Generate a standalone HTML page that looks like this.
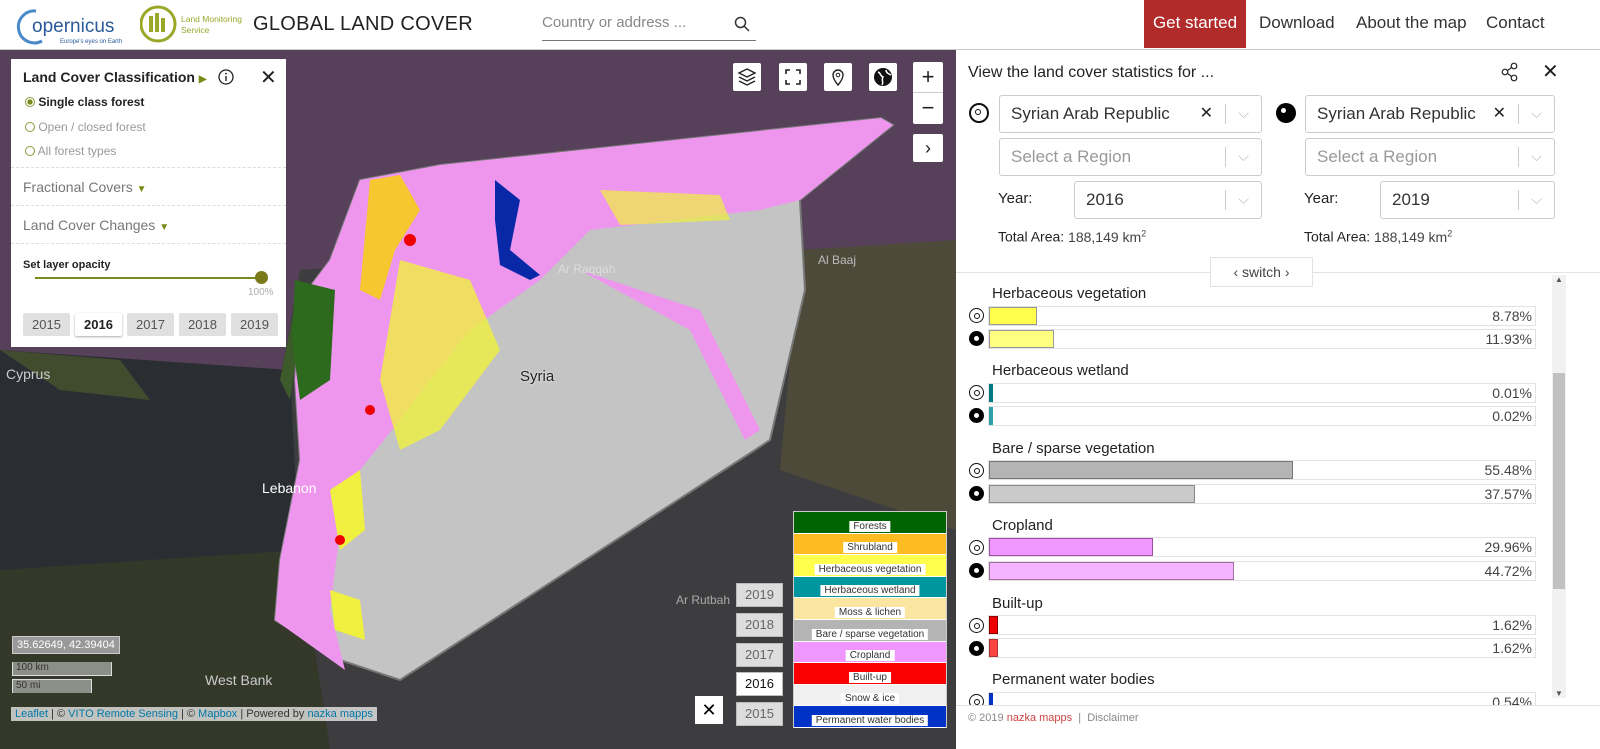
<!DOCTYPE html>
<html><head><meta charset="utf-8"><style>
*{box-sizing:border-box;margin:0;padding:0}
body{width:1600px;height:749px;overflow:hidden;background:#fff;font-family:"Liberation Sans",sans-serif;position:relative}
.hdr{position:absolute;left:0;top:0;width:1600px;height:50px;background:#fff;border-bottom:1px solid #ccc}
.nav{position:absolute;top:0;height:48px;line-height:46px;font-size:17px;color:#333}
.map{position:absolute;left:0;top:50px;width:956px;height:699px;overflow:hidden;background:#3b3b3d}
.btn{position:absolute;background:#fff;width:28px;height:28px;border-radius:2px}
.rp{position:absolute;left:956px;top:50px;width:644px;height:699px;background:#fff}
.sel{position:absolute;border:1px solid #ccc;border-radius:3px;height:38px;font-size:17px;color:#333;line-height:36px;padding-left:11px}
.sel .ar{position:absolute;right:0;top:8px;width:36px;height:20px;border-left:1px solid #ccc;color:#bbb;text-align:center;line-height:18px;font-size:14px}
.ph{color:#999}
.lbl{position:absolute;font-size:15px;color:#222}
.ttl{position:absolute;left:992px;font-size:15px;color:#222}
.bar{position:absolute;left:988px;width:548px;height:20px;border:1px solid #e2e2e2}
.bar i{position:absolute;left:0;top:0;bottom:0;display:block}
.bar span{position:absolute;right:3px;top:1px;font-size:14px;color:#444}
.ic{position:absolute;left:969px;width:15px;height:15px;border-radius:50%}
.ic.o{border:1.5px solid #111}
.ic.o:after{content:"";position:absolute;left:4px;top:4px;width:4px;height:4px;border:1px solid #111;border-radius:50%}
.ic.f{background:#000}
.ic.f:after{content:"";position:absolute;left:5px;top:5px;width:5px;height:5px;background:#fff;border-radius:50%}
.leg div{height:21.6px;border-bottom:1px solid #fff;text-align:center;position:relative}
.leg span{position:absolute;left:50%;transform:translateX(-50%);bottom:1px;background:#fff;font-size:10px;color:#333;padding:0 4px;white-space:nowrap;line-height:11px}
.yr{position:absolute;left:736px;width:47px;height:24px;background:#ddd;border:1px solid #bbb;font-size:13px;color:#666;text-align:center;line-height:22px}
.yb{position:absolute;top:254px;width:47px;height:23px;background:#e0e0e0;font-size:13px;color:#555;text-align:center;line-height:23px;border-radius:2px}
</style></head><body>
<div class="hdr">
 <div style="position:absolute;left:14px;top:5px;width:110px;height:40px">
  <svg width="110" height="40"><path d="M22 6 A16 16 0 1 0 28 36" fill="none" stroke="#4a8ac8" stroke-width="3"/><text x="18" y="27" font-size="19" fill="#2a5a9a" font-family="Liberation Sans">opernicus</text><text x="46" y="38" font-size="6" fill="#2a5a9a">Europe's eyes on Earth</text></svg>
 </div>
 <div style="position:absolute;left:140px;top:4px;width:105px;height:42px">
  <svg width="105" height="42"><circle cx="18" cy="20" r="17" fill="none" stroke="#9aa82a" stroke-width="3"/><rect x="9" y="12" width="4" height="16" fill="#9aa82a"/><rect x="15" y="9" width="4" height="19" fill="#9aa82a"/><rect x="21" y="14" width="4" height="14" fill="#9aa82a"/><text x="41" y="18" font-size="8.5" fill="#9aa82a">Land Monitoring</text><text x="41" y="29" font-size="8.5" fill="#9aa82a">Service</text></svg>
 </div>
 <div style="position:absolute;left:253px;top:13px;font-size:20px;color:#222;letter-spacing:0.3px">GLOBAL LAND COVER</div>
 <div style="position:absolute;left:542px;top:14px;width:214px;height:27px;border-bottom:1.5px solid #777;font-size:15px;color:#888">Country or address ...
  <svg style="position:absolute;right:6px;top:2px" width="16" height="16"><circle cx="6.5" cy="6.5" r="5" fill="none" stroke="#333" stroke-width="1.5"/><path d="M10 10 L15 15" stroke="#333" stroke-width="1.5"/></svg></div>
 <div class="nav" style="left:1144px;width:102px;background:#b22b2b;color:#fff;text-align:center">Get started</div>
 <div class="nav" style="left:1259px">Download</div>
 <div class="nav" style="left:1356px">About the map</div>
 <div class="nav" style="left:1486px">Contact</div>
</div>

<div class="map">
<svg width="956" height="699" style="position:absolute;left:0;top:0">
 <rect x="0" y="0" width="956" height="699" fill="#3d3d3f"/>
 <path d="M0 0 H956 V250 L800 260 L760 230 L560 200 L300 220 L280 330 L0 310 Z" fill="#57405a"/>
 <path d="M800 200 L956 190 V480 L780 420 Z" fill="#4e4a3a"/>
 <path d="M0 300 L290 320 L300 520 L0 520 Z" fill="#2a2e33"/>
 <path d="M0 520 L300 500 L330 699 H0 Z" fill="#333828"/>
 <path d="M0 300 L120 310 L150 350 L60 340 Z" fill="#4b5a2e" opacity=".7"/>
 <path d="M300 230 L280 330 L290 350 L300 280 Z" fill="#3d5a2a"/>
 <path d="M520 120 L560 100 L620 130 L700 110 L760 130 L700 150 L600 150 Z" fill="#6a6a2e" opacity=".5"/>
 <path d="M360 130 L440 115 L881 68 L893 75 L800 150 L805 240 L770 390 L755 400 L400 630 L340 610 L275 570 L280 510 L300 410 L295 330 L300 250 L330 210 Z" fill="#c4c4c4" stroke="#777" stroke-width="2"/>
 <path d="M360 130 L440 115 L881 68 L893 75 L800 150 L760 160 L590 180 L540 230 L470 280 L430 330 L400 370 L360 420 L340 480 L330 560 L345 620 L275 570 L280 510 L300 410 L295 330 L300 250 L330 210 Z" fill="#ee96ee"/>
 <path d="M580 220 L700 260 L760 380 L745 390 L690 280 Z" fill="#ee96ee"/>
 <path d="M370 130 L400 125 L420 160 L395 200 L380 250 L360 240 Z" fill="#f5c830"/>
 <path d="M400 210 L470 230 L500 300 L440 380 L400 400 L380 330 Z" fill="#f0f040" opacity=".8"/>
 <path d="M330 440 L360 420 L365 480 L340 500 Z" fill="#f0f040"/>
 <path d="M330 540 L360 550 L365 590 L335 580 Z" fill="#f0f040"/>
 <path d="M600 140 L720 145 L730 170 L620 175 Z" fill="#f0f040" opacity=".7"/>
 <path d="M295 230 L335 240 L330 330 L300 350 L292 290 Z" fill="#2e6a1e"/>
 <path d="M495 130 L520 150 L510 200 L540 225 L530 230 L500 215 L495 170 Z" fill="#0828a8"/>
 <circle cx="410" cy="190" r="6" fill="#e00"/><circle cx="370" cy="360" r="5" fill="#e00"/><circle cx="340" cy="490" r="5" fill="#e00"/>
</svg>
 <div style="position:absolute;left:520px;top:318px;color:#222;font-size:15px;text-shadow:0 0 2px #fff">Syria</div>
 <div style="position:absolute;left:558px;top:212px;color:#ddd;font-size:12px">Ar Raqqah</div>
 <div style="position:absolute;left:262px;top:430px;color:#fff;font-size:14px">Lebanon</div>
 <div style="position:absolute;left:6px;top:316px;color:#ccc;font-size:14px">Cyprus</div>
 <div style="position:absolute;left:205px;top:622px;color:#ccc;font-size:14px">West Bank</div>
 <div style="position:absolute;left:818px;top:203px;color:#bbb;font-size:12px">Al Baaj</div>
 <div style="position:absolute;left:676px;top:543px;color:#aaa;font-size:12px">Ar Rutbah</div>

 <div style="position:absolute;left:11px;top:9px;width:275px;height:288px;background:#fff">
  <div style="position:absolute;left:12px;top:10px;font-size:14px;font-weight:bold;color:#222">Land Cover Classification <span style="color:#7a8a1a;font-size:10px">▶</span></div>
  <svg style="position:absolute;left:207px;top:10px" width="16" height="16"><circle cx="8" cy="8" r="7" fill="none" stroke="#222" stroke-width="1.3"/><rect x="7.3" y="7" width="1.4" height="5" fill="#222"/><circle cx="8" cy="4.6" r="0.9" fill="#222"/></svg>
  <div style="position:absolute;left:249px;top:6px;font-size:20px;color:#222">✕</div>
  <div style="position:absolute;left:14px;top:36px;font-size:12px;font-weight:bold;color:#222"><span style="display:inline-block;width:10px;height:10px;border:1.5px solid #8a9a3a;border-radius:50%;background:radial-gradient(#7a8a1a 45%,#fff 50%);vertical-align:-1px"></span> Single class forest</div>
  <div style="position:absolute;left:14px;top:61px;font-size:12px;color:#999"><span style="display:inline-block;width:10px;height:10px;border:1.5px solid #8a9a3a;border-radius:50%;vertical-align:-1px"></span> Open / closed forest</div>
  <div style="position:absolute;left:14px;top:85px;font-size:12px;color:#999"><span style="display:inline-block;width:10px;height:10px;border:1.5px solid #8a9a3a;border-radius:50%;vertical-align:-1px"></span> All forest types</div>
  <div style="position:absolute;left:0;right:0;top:108px;border-top:1px dashed #ddd"></div>
  <div style="position:absolute;left:12px;top:120px;font-size:14px;color:#777">Fractional Covers <span style="color:#7a8a1a;font-size:10px">▼</span></div>
  <div style="position:absolute;left:0;right:0;top:146px;border-top:1px dashed #ddd"></div>
  <div style="position:absolute;left:12px;top:158px;font-size:14px;color:#777">Land Cover Changes <span style="color:#7a8a1a;font-size:10px">▼</span></div>
  <div style="position:absolute;left:0;right:0;top:184px;border-top:1px dashed #ddd"></div>
  <div style="position:absolute;left:12px;top:200px;font-size:11px;font-weight:bold;color:#222">Set layer opacity</div>
  <div style="position:absolute;left:24px;top:218px;width:228px;height:2px;background:#7a8a1a"></div>
  <div style="position:absolute;left:244px;top:212px;width:13px;height:13px;border-radius:50%;background:#7a7a1a"></div>
  <div style="position:absolute;left:237px;top:228px;font-size:10px;color:#aaa">100%</div>
  <div class="yb" style="left:12px">2015</div>
  <div class="yb" style="left:64px;background:#fff;color:#222;font-weight:bold;box-shadow:0 1px 2px #aaa">2016</div>
  <div class="yb" style="left:116px">2017</div>
  <div class="yb" style="left:168px">2018</div>
  <div class="yb" style="left:220px">2019</div>
 </div>

 <div class="btn" style="left:733px;top:13px"><svg width="28" height="28"><path d="M14 6 L22 10 L14 14 L6 10Z M6 14 L14 18 L22 14 M6 18 L14 22 L22 18" fill="none" stroke="#222" stroke-width="1.4"/></svg></div>
 <div class="btn" style="left:779px;top:13px"><svg width="28" height="28"><path d="M7 11V7H11 M17 7H21V11 M21 17V21H17 M11 21H7V17" fill="none" stroke="#222" stroke-width="1.6"/></svg></div>
 <div class="btn" style="left:824px;top:13px"><svg width="28" height="28"><path d="M14 22 C9 16 9 13 9 12 A5 5 0 0 1 19 12 C19 13 19 16 14 22Z" fill="none" stroke="#222" stroke-width="1.4"/><circle cx="14" cy="12" r="1.8" fill="none" stroke="#222"/></svg></div>
 <div class="btn" style="left:869px;top:13px"><svg width="28" height="28"><circle cx="14" cy="14" r="9" fill="#111"/><path d="M9 9 C12 10 11 13 14 14 C12 17 15 19 13 22 M17 7 C17 10 20 11 22 12" stroke="#fff" stroke-width="1.5" fill="none"/></svg></div>
 <div style="position:absolute;left:913px;top:12px;width:30px;height:62px;background:#fff;border-radius:2px;font-size:22px;text-align:center;line-height:30px;color:#222">+<div style="border-top:1px solid #ccc">−</div></div>
 <div class="btn" style="left:913px;top:84px;width:30px;height:28px;text-align:center;line-height:28px;font-size:18px;color:#222">›</div>

 <div style="position:absolute;left:12px;top:586px;background:#999;color:#fff;font-size:11px;padding:2px 4px;border:1px solid #ccc">35.62649, 42.39404</div>
 <div style="position:absolute;left:12px;top:612px;width:100px;height:14px;background:rgba(200,200,200,.6);border:1px solid #ddd;border-top:none;font-size:10px;color:#333;padding-left:3px">100 km</div>
 <div style="position:absolute;left:12px;top:629px;width:80px;height:14px;background:rgba(200,200,200,.6);border:1px solid #ddd;border-bottom:none;font-size:10px;color:#333;padding-left:3px">50 mi</div>
 <div style="position:absolute;left:11px;top:657px;background:rgba(255,255,255,.7);font-size:11px;color:#333;padding:1px 4px"><span style="color:#0078a8">Leaflet</span> | © <span style="color:#0078a8">VITO Remote Sensing</span> | © <span style="color:#0078a8">Mapbox</span> | Powered by <span style="color:#0078a8">nazka mapps</span></div>

 <div class="yr" style="top:533px">2019</div>
 <div class="yr" style="top:563px">2018</div>
 <div class="yr" style="top:593px">2017</div>
 <div class="yr" style="top:622px;background:#fff;color:#111">2016</div>
 <div class="yr" style="top:652px">2015</div>
 <div style="position:absolute;left:695px;top:646px;width:28px;height:28px;background:#fff;text-align:center;line-height:28px;font-size:18px">✕</div>
 <div class="leg" style="position:absolute;left:793px;top:461px;width:154px;height:217px;border:1px solid #ccc">
  <div style="background:#006400"><span>Forests</span></div>
  <div style="background:#ffbb22"><span>Shrubland</span></div>
  <div style="background:#ffff4c"><span>Herbaceous vegetation</span></div>
  <div style="background:#0096a0"><span>Herbaceous wetland</span></div>
  <div style="background:#fae6a0"><span>Moss &amp; lichen</span></div>
  <div style="background:#b4b4b4"><span>Bare / sparse vegetation</span></div>
  <div style="background:#f096ff"><span>Cropland</span></div>
  <div style="background:#fa0000"><span>Built-up</span></div>
  <div style="background:#f0f0f0"><span>Snow &amp; ice</span></div>
  <div style="background:#0032c8"><span>Permanent water bodies</span></div>
 </div>
</div>

<div class="rp">
 <div style="position:absolute;left:12px;top:14px;font-size:16px;color:#222">View the land cover statistics for ...</div>
 <svg style="position:absolute;left:544px;top:12px" width="20" height="20"><circle cx="5" cy="10" r="2.8" fill="none" stroke="#222" stroke-width="1.2"/><circle cx="14" cy="4" r="2.8" fill="none" stroke="#222" stroke-width="1.2"/><circle cx="14" cy="16" r="2.8" fill="none" stroke="#222" stroke-width="1.2"/><path d="M7.5 8.7 L11.5 5.5 M7.5 11.3 L11.5 14.5" stroke="#222" stroke-width="1.2"/></svg>
 <div style="position:absolute;left:586px;top:9px;font-size:20px;color:#222">✕</div>
 <div class="ic o" style="top:53px;left:13px;width:20px;height:20px;border-width:2px"></div>
 <div class="ic f" style="top:53px;left:320px;width:20px;height:20px"></div>
 <div class="sel" style="left:43px;top:45px;width:263px">Syrian Arab Republic<span style="position:absolute;right:48px;font-size:16px;color:#222">✕</span><div class="ar">⌵</div></div>
 <div class="sel" style="left:43px;top:88px;width:263px"><span class="ph">Select a Region</span><div class="ar">⌵</div></div>
 <div class="lbl" style="left:42px;top:140px">Year:</div>
 <div class="sel" style="left:118px;top:131px;width:188px">2016<div class="ar">⌵</div></div>
 <div class="lbl" style="left:42px;top:178px;font-size:14px">Total Area: <span style="color:#444">188,149 km<sup style="font-size:9px">2</sup></span></div>
 <div class="sel" style="left:349px;top:45px;width:250px">Syrian Arab Republic<span style="position:absolute;right:48px;font-size:16px;color:#222">✕</span><div class="ar">⌵</div></div>
 <div class="sel" style="left:349px;top:88px;width:250px"><span class="ph">Select a Region</span><div class="ar">⌵</div></div>
 <div class="lbl" style="left:348px;top:140px">Year:</div>
 <div class="sel" style="left:424px;top:131px;width:175px">2019<div class="ar">⌵</div></div>
 <div class="lbl" style="left:348px;top:178px;font-size:14px">Total Area: <span style="color:#444">188,149 km<sup style="font-size:9px">2</sup></span></div>
 <div style="position:absolute;left:0;right:0;top:222px;border-top:1px solid #e2e2e2"></div>
 <div style="position:absolute;left:254px;top:207px;width:103px;height:30px;border:1px solid #e2e2e2;background:#fff;font-size:14px;color:#444;text-align:center;line-height:28px">‹ switch ›</div>
 <div style="position:absolute;left:596px;top:225px;width:14px;height:423px;background:#f1f1f1"><div style="position:absolute;left:1px;right:1px;top:98px;height:216px;background:#c1c1c1"></div><div style="position:absolute;top:0;width:14px;font-size:8px;text-align:center;color:#555">▲</div><div style="position:absolute;bottom:0;width:14px;font-size:8px;text-align:center;color:#555">▼</div></div>
 <div style="position:absolute;left:0;right:0;top:655px;border-top:1px solid #e2e2e2;padding:6px 12px;font-size:11px;color:#888"><span>© 2019 <span style="color:#c44">nazka mapps</span> &nbsp;| &nbsp;Disclaimer</span></div>
</div>

<div style="position:absolute;left:956px;top:275px;width:596px;height:430px;overflow:hidden">
<div style="position:absolute;left:-956px;top:-275px;width:1600px;height:749px">
 <div class="ttl" style="top:285px">Herbaceous vegetation</div>
 <div class="ic o" style="top:308px"></div><div class="bar" style="top:306px"><i style="width:48px;background:#ffff4c;border:1px solid #999"></i><span>8.78%</span></div>
 <div class="ic f" style="top:331px"></div><div class="bar" style="top:329px"><i style="width:65px;background:#ffff80;border:1px solid #999"></i><span>11.93%</span></div>
 <div class="ttl" style="top:362px">Herbaceous wetland</div>
 <div class="ic o" style="top:385px"></div><div class="bar" style="top:383px"><i style="width:4px;background:#007a80"></i><span>0.01%</span></div>
 <div class="ic f" style="top:408px"></div><div class="bar" style="top:406px"><i style="width:4px;background:#30a0a8"></i><span>0.02%</span></div>
 <div class="ttl" style="top:440px">Bare / sparse vegetation</div>
 <div class="ic o" style="top:463px"></div><div class="bar" style="top:460px"><i style="width:304px;background:#b4b4b4;border:1px solid #777"></i><span>55.48%</span></div>
 <div class="ic f" style="top:486px"></div><div class="bar" style="top:484px"><i style="width:206px;background:#cacaca;border:1px solid #888"></i><span>37.57%</span></div>
 <div class="ttl" style="top:517px">Cropland</div>
 <div class="ic o" style="top:540px"></div><div class="bar" style="top:537px"><i style="width:164px;background:#f096ff;border:1px solid #a050a0"></i><span>29.96%</span></div>
 <div class="ic f" style="top:563px"></div><div class="bar" style="top:561px"><i style="width:245px;background:#f5b4ff;border:1px solid #a070a0"></i><span>44.72%</span></div>
 <div class="ttl" style="top:595px">Built-up</div>
 <div class="ic o" style="top:618px"></div><div class="bar" style="top:615px"><i style="width:9px;background:#e00;border:1px solid #800"></i><span>1.62%</span></div>
 <div class="ic f" style="top:641px"></div><div class="bar" style="top:638px"><i style="width:9px;background:#f44;border:1px solid #a33"></i><span>1.62%</span></div>
 <div class="ttl" style="top:671px">Permanent water bodies</div>
 <div class="ic o" style="top:694px"></div><div class="bar" style="top:692px"><i style="width:4px;background:#0032c8"></i><span>0.54%</span></div>
</div></div>
</body></html>
